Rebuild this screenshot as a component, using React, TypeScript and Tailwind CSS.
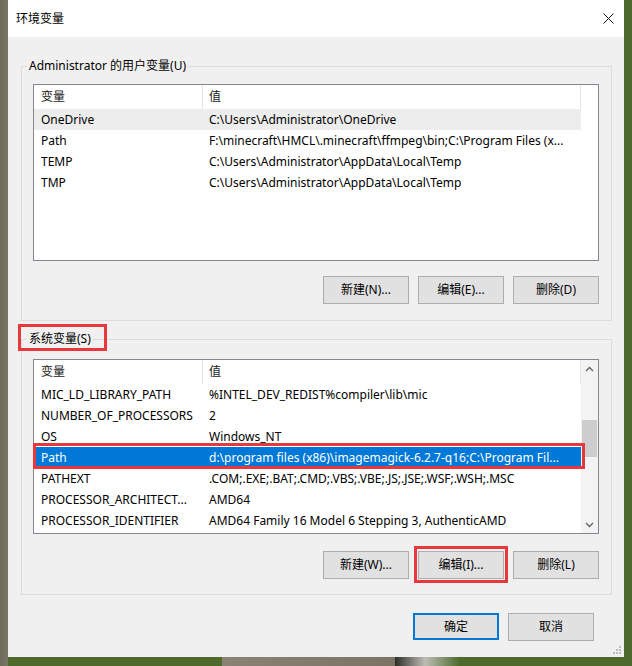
const userVars: [string, string][] = [
  ["OneDrive", "C:\\Users\\Administrator\\OneDrive"],
  ["Path", "F:\\minecraft\\HMCL\\.minecraft\\ffmpeg\\bin;C:\\Program Files (x..."],
  ["TEMP", "C:\\Users\\Administrator\\AppData\\Local\\Temp"],
  ["TMP", "C:\\Users\\Administrator\\AppData\\Local\\Temp"],
]

const sysVars: [string, string][] = [
  ["MIC_LD_LIBRARY_PATH", "%INTEL_DEV_REDIST%compiler\\lib\\mic"],
  ["NUMBER_OF_PROCESSORS", "2"],
  ["OS", "Windows_NT"],
  ["Path", "d:\\program files (x86)\\imagemagick-6.2.7-q16;C:\\Program Fil..."],
  ["PATHEXT", ".COM;.EXE;.BAT;.CMD;.VBS;.VBE;.JS;.JSE;.WSF;.WSH;.MSC"],
  ["PROCESSOR_ARCHITECT...", "AMD64"],
  ["PROCESSOR_IDENTIFIER", "AMD64 Family 16 Model 6 Stepping 3, AuthenticAMD"],
]

function Header() {
  return (
    <div className="flex h-[24px] w-[547px] shrink-0 text-[#1a1a1a]">
      <div className="flex w-[169px] items-center border-r border-[#e5e5e5] pl-[7px]">变量</div>
      <div className="flex w-[378px] items-center border-r border-[#e5e5e5] pl-[6px]">值</div>
    </div>
  )
}

function Row({ name, value, hover, selected }: { name: string; value: string; hover?: boolean; selected?: boolean }) {
  return (
    <div
      className={
        "relative flex h-[21px] w-[547px] shrink-0 items-center whitespace-nowrap " +
        (selected ? "bg-[#0078d7] text-white" : hover ? "bg-[#ededed]" : "")
      }
    >
      <div className="w-[169px] overflow-hidden pl-[7px]">{name}</div>
      <div className="w-[378px] overflow-hidden pl-[6px]">{value}</div>
      {/* 标注框 */}
      {selected && <div className="absolute -top-[4px] -bottom-[1px] -left-[1px] -right-[4px] border-[3px] border-[#e8383d]" />}
    </div>
  )
}

function Button({ label, boxed, primary }: { label: string; boxed?: boolean; primary?: boolean }) {
  return (
    <div
      className={
        "relative flex w-[86px] items-center justify-center bg-[#e1e1e1] " +
        (primary ? "h-[27px] border-2 border-[#0078d7]" : "h-[28px] border border-[#adadad]")
      }
    >
      {label}
      {boxed && <div className="absolute -top-[6px] -bottom-[5px] -left-[5px] -right-[5px] border-[3px] border-[#e8383d]" />}
    </div>
  )
}

function Chevron({ up }: { up?: boolean }) {
  return (
    <svg width="9" height="6" viewBox="0 0 9 6" fill="none" stroke="#606060" strokeWidth="1.3">
      {up ? <path d="M1 5 L4.5 1.5 L8 5" /> : <path d="M1 1 L4.5 4.5 L8 1" />}
    </svg>
  )
}

export default function App() {
  return (
    <div className="flex h-[666px] w-[632px] overflow-hidden bg-[linear-gradient(90deg,#6e6b5a_0px,#7a7566_8px,#4d6a2c_8px,#4d6a2c_222px,#8a8272_222px,#7b7465_395px,#2e2e28_395px,#bdbdb5_425px,#4d6a2c_460px,#4d6a2c_100%)] text-[12px] text-black font-['Noto_Sans','Noto_Sans_CJK_SC',sans-serif]">
      <div className="ml-[8px] flex h-[657px] w-[616px] flex-col bg-[#f0f0f0]">
        {/* 标题栏 */}
        <div className="flex h-[37px] shrink-0 items-center justify-between bg-white pl-[8px] pr-[10px]">
          <span>环境变量</span>
          <svg width="11" height="11" viewBox="0 0 11 11" stroke="#111" strokeWidth="1">
            <path d="M0.5 0.5 L10.5 10.5 M10.5 0.5 L0.5 10.5" />
          </svg>
        </div>

        <div className="relative flex flex-1 flex-col pl-[13px] pr-[12px] pt-[21px]">
          {/* 用户变量 */}
          <fieldset className="border border-[#dcdcdc] pb-[16px] pl-[11px] pr-[12px]">
            <legend className="ml-[-6px] px-[2px] leading-[16px]">Administrator 的用户变量(U)</legend>
            <div className="mt-[10px] flex h-[177px] flex-col border border-[#828790] bg-white">
              <Header />
              {userVars.map(([n, v], i) => (
                <Row key={n} name={n} value={v} hover={i === 0} />
              ))}
            </div>
            <div className="mt-[15px] flex justify-end gap-[9px]">
              <Button label="新建(N)..." />
              <Button label="编辑(E)..." />
              <Button label="删除(D)" />
            </div>
          </fieldset>

          {/* 系统变量 */}
          <fieldset className="mt-[10px] border border-[#dcdcdc] pb-[15px] pl-[11px] pr-[12px]">
            <legend className="relative ml-[-6px] px-[2px] leading-[16px]">
              系统变量(S)
              <div className="absolute -top-[7px] -bottom-[4px] -left-[9px] -right-[14px] border-[3px] border-[#e8383d]" />
            </legend>
            <div className="mt-[12px] flex h-[175px] border border-[#828790] bg-white">
              <div className="flex flex-1 flex-col">
                <Header />
                {sysVars.map(([n, v]) => (
                  <Row key={n} name={n} value={v} selected={n === "Path"} />
                ))}
              </div>
              <div className="flex w-[17px] flex-col bg-[#f3f3f3]">
                <div className="flex h-[17px] items-center justify-center">
                  <Chevron up />
                </div>
                <div className="flex-1">
                  <div className="mx-[1px] mt-[43px] h-[37px] bg-[#cdcdcd]" />
                </div>
                <div className="flex h-[17px] items-center justify-center">
                  <Chevron />
                </div>
              </div>
            </div>
            <div className="mt-[17px] flex justify-end gap-[9px]">
              <Button label="新建(W)..." />
              <Button label="编辑(I)..." boxed />
              <Button label="删除(L)" />
            </div>
          </fieldset>

          <div className="mt-[18px] flex justify-end gap-[9px] pr-[18px]">
            <Button label="确定" primary />
            <Button label="取消" />
          </div>

          {/* 尺寸手柄 */}
          <svg className="absolute bottom-[2px] right-[2px]" width="10" height="10" viewBox="0 0 10 10" fill="#bcbcbc">
            <rect x="7" y="1" width="2" height="2" />
            <rect x="4" y="4" width="2" height="2" />
            <rect x="7" y="4" width="2" height="2" />
            <rect x="1" y="7" width="2" height="2" />
            <rect x="4" y="7" width="2" height="2" />
            <rect x="7" y="7" width="2" height="2" />
          </svg>
        </div>
      </div>
    </div>
  )
}
